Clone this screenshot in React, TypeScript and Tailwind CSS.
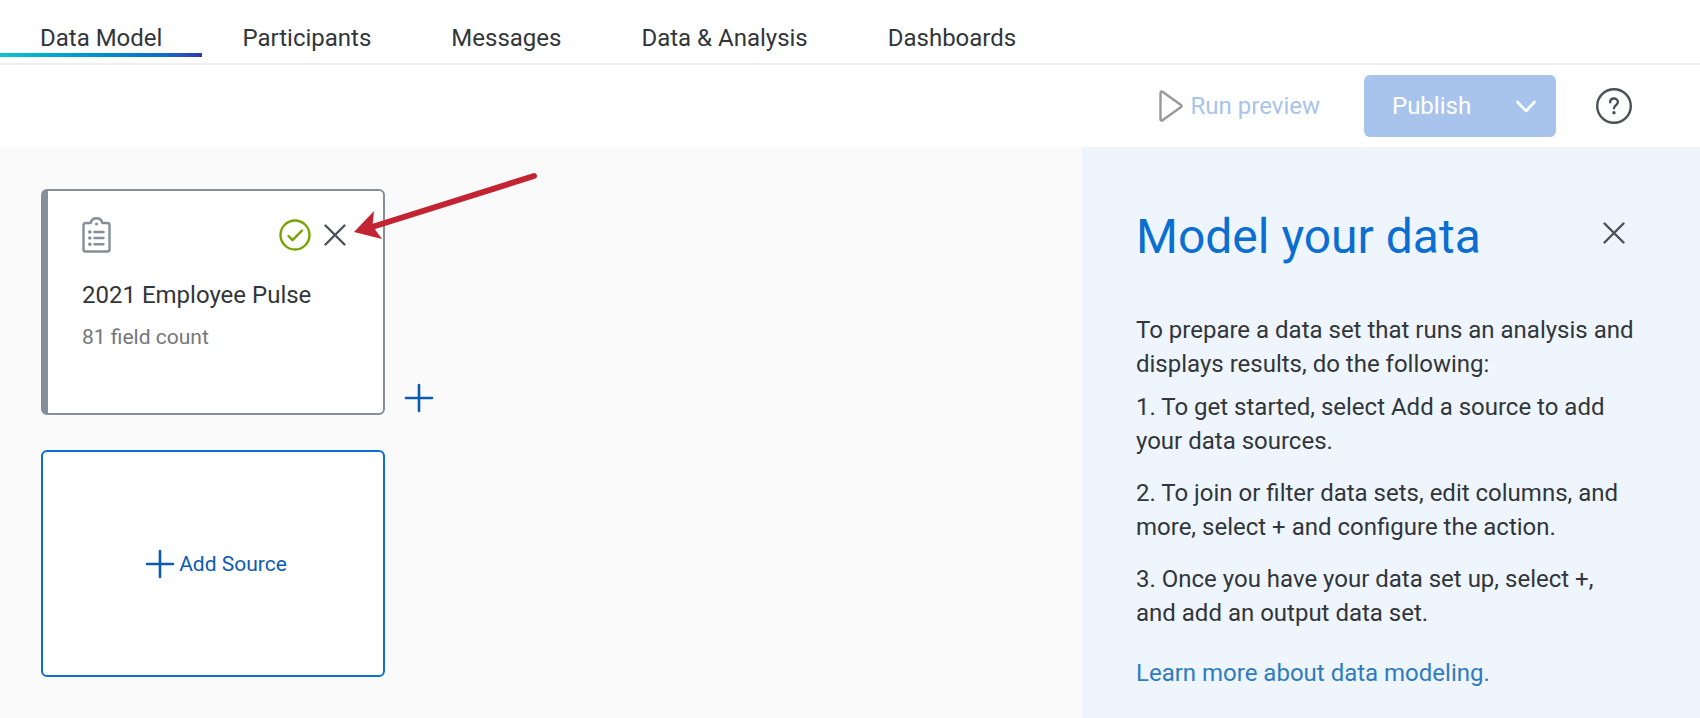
import { useState } from "react";
import clsx from "clsx";

const tabs = ["Data Model", "Participants", "Messages", "Data & Analysis", "Dashboards"];

const steps = [
  "1. To get started, select Add a source to add your data sources.",
  "2. To join or filter data sets, edit columns, and more, select + and configure the action.",
  "3. Once you have your data set up, select +, and add an output data set.",
];

function PlusIcon() {
  return (
    <svg width="30" height="30" viewBox="0 0 30 30" fill="none" stroke="currentColor" strokeWidth="2.6" strokeLinecap="round">
      <path d="M15 2v26M2 15h26" />
    </svg>
  );
}

function CloseIcon() {
  return (
    <svg width="24" height="24" viewBox="0 0 24 24" fill="none" stroke="currentColor" strokeWidth="2.4" strokeLinecap="round">
      <path d="M2.5 2.5l19 19M21.5 2.5l-19 19" />
    </svg>
  );
}

function ClipboardIcon() {
  return (
    <svg width="30" height="36" viewBox="0 0 30 36" fill="none" stroke="#868f99" strokeWidth="2.4" strokeLinecap="round" strokeLinejoin="round">
      <path d="M1.500 8v24.500a2 2 0 0 0 2 2h22a2 2 0 0 0 2-2V8a2 2 0 0 0-2-2h-5.200C19.800 2.900 17.500 1.200 14.500 1.200S9.200 2.900 8.700 6H3.500a2 2 0 0 0-2 2z" />
      <path d="M12.500 15h9M12.500 21h9M12.500 27.300h9" />
      <g fill="#868f99" stroke="none">
        <circle cx="14.500" cy="7" r="1.600" />
        <circle cx="7.800" cy="15" r="1.800" />
        <circle cx="7.800" cy="21" r="1.800" />
        <circle cx="7.800" cy="27.300" r="1.800" />
      </g>
    </svg>
  );
}

function CheckIcon() {
  return (
    <svg width="32" height="32" viewBox="0 0 32 32" fill="none" stroke="#78a300" strokeWidth="2.4" strokeLinecap="round" strokeLinejoin="round">
      <circle cx="16" cy="16" r="14.500" />
      <path d="M9.500 17l4 4.200L23 11.500" />
    </svg>
  );
}

function HelpIcon() {
  return (
    <svg width="38" height="38" viewBox="0 0 38 38" fill="none" stroke="#4b5156" strokeWidth="2.4" strokeLinecap="round" strokeLinejoin="round">
      <circle cx="19" cy="19" r="16.800" />
      <path d="M15.200 15.200c0-2.200 1.600-3.700 3.800-3.700s3.900 1.500 3.900 3.600c0 2.900-3.900 3.100-3.900 6.200" />
      <circle cx="19" cy="25.800" r="1.700" fill="#4b5156" stroke="none" />
    </svg>
  );
}

export default function App() {
  const [activeTab, setActiveTab] = useState("Data Model");
  const [showHelp, setShowHelp] = useState(true);

  return (
    <div className="min-h-screen flex flex-col bg-white font-[Roboto,sans-serif] text-2xl text-[#32363a]">
      {/* TABS */}
      <nav className="flex h-[65px] items-start border-b-2 border-[#efefef]">
        {tabs.map((tab) => (
          <button
            key={tab}
            onClick={() => setActiveTab(tab)}
            className="relative h-[57px] px-10 pt-5 pb-1 leading-9"
          >
            {tab}
            {activeTab === tab && (
              <span className="absolute inset-x-0 bottom-0 h-1 bg-linear-to-r from-[#0fc3d0] via-[#0b6ed0] via-80% to-[#2e37b5]" />
            )}
          </button>
        ))}
      </nav>

      {/* TOOLBAR */}
      <div className="flex h-[82px] items-center justify-end pr-[67px]">
        <button className="flex items-center gap-2 text-[#a8c4ec]">
          <svg width="24" height="32" viewBox="0 0 24 32" fill="none" stroke="#999" strokeWidth="2.4" strokeLinejoin="round">
            <path d="M1.500 2.800v26.400c0 1.200 1 1.700 2 1L22 17c.9-.7.900-1.300 0-2L3.500 1.800c-1-.7-2-.2-2 1z" />
          </svg>
          Run preview
        </button>
        <button className="ml-11 flex h-[62px] w-48 items-center justify-between rounded-md bg-[#a8c4ec] pr-5 pl-7 text-white">
          Publish
          <svg width="20" height="14" viewBox="0 0 20 14" fill="none" stroke="currentColor" strokeWidth="2.6" strokeLinecap="round" strokeLinejoin="round">
            <path d="M1.500 3l8.500 9 8.500-9" />
          </svg>
        </button>
        <button aria-label="Help" className="ml-[39px]" onClick={() => setShowHelp(true)}>
          <HelpIcon />
        </button>
      </div>

      <div className="flex flex-1">
        {/* CANVAS */}
        <main className="flex flex-1 flex-col gap-[35px] bg-[#fafafa] px-[41px] pt-[42px] pb-10">
          <div className="relative flex items-end gap-[19px]">
            <section className="h-[226px] w-[344px] rounded-md border-2 border-l-[7px] border-[#868f99] bg-white pr-9 pl-[34px] pt-[26px]">
              <div className="flex items-center">
                <ClipboardIcon />
                <span className="ml-auto">
                  <CheckIcon />
                </span>
                <button aria-label="Remove source" className="ml-3 text-[#4b5156]">
                  <CloseIcon />
                </button>
              </div>
              <h2 className="mt-6 leading-9">2021 Employee Pulse</h2>
              <p className="mt-2 text-[21px] leading-8 text-[#74777a]">81 field count</p>
            </section>
            <button aria-label="Add step" className="pb-0.5 text-[#0b5cb0]">
              <PlusIcon />
            </button>

            {/* pointer to the remove button */}
            <svg className="pointer-events-none absolute left-[309px] -top-5" width="192" height="76" viewBox="0 0 192 76">
              <path d="M184 7L22 58" stroke="#c32432" strokeWidth="6" strokeLinecap="round" />
              <path d="M4 63L24 42l-1.500 15L32 70z" fill="#c32432" />
            </svg>
          </div>

          <button className="flex h-[227px] w-[344px] items-center justify-center gap-1 rounded-md border-2 border-[#0b6ed0] bg-white pl-1.5 text-[21px] text-[#0b5cb0]">
            <PlusIcon />
            Add Source
          </button>
        </main>

        {/* HELP PANEL */}
        <aside className={clsx("w-[618px] bg-[#eef5fd] pt-[58px] pr-16 pl-[54px] leading-[34px]", !showHelp && "hidden")}>
          <div className="flex items-start justify-between pr-2.5">
            <h1 className="text-5xl leading-[64px] text-[#0b6ed0]">Model your data</h1>
            <button aria-label="Close" className="mt-4 text-[#4b5156]" onClick={() => setShowHelp(false)}>
              <CloseIcon />
            </button>
          </div>
          <p className="mt-11">To prepare a data set that runs an analysis and displays results, do the following:</p>
          <ol className="mt-[9px] flex flex-col gap-[18px]">
            {steps.map((step) => (
              <li key={step}>{step}</li>
            ))}
          </ol>
          <a href="#learn-more" className="mt-[26px] block text-[#2f7bc0]">
            Learn more about data modeling.
          </a>
        </aside>
      </div>
    </div>
  );
}
